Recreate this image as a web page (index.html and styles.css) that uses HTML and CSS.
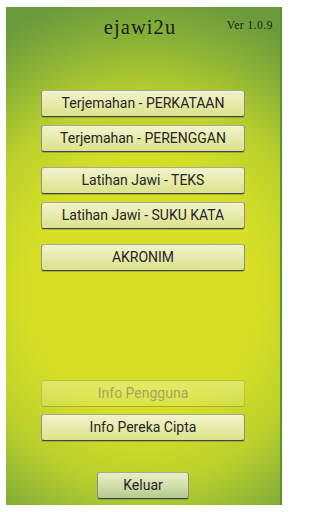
FILE: index.html
```html
<!DOCTYPE html>
<html>
<head>
<meta charset="utf-8">
<link rel="stylesheet" href="styles.css">
</head>
<body>
<div class="panel">
  <div class="header">
    <div></div>
    <div class="title">ejawi2u</div>
    <div class="ver">Ver 1.0.9</div>
  </div>
  <div class="group g1">
    <div class="btn">Terjemahan - PERKATAAN</div>
    <div class="btn">Terjemahan - PERENGGAN</div>
  </div>
  <div class="group g2">
    <div class="btn">Latihan Jawi - TEKS</div>
    <div class="btn">Latihan Jawi - SUKU KATA</div>
  </div>
  <div class="group g3">
    <div class="btn">AKRONIM</div>
  </div>
  <div class="group g4">
    <div class="btn disabled">Info Pengguna</div>
    <div class="btn">Info Pereka Cipta</div>
  </div>
  <div class="group g5">
    <div class="btn exit">Keluar</div>
  </div>
</div>
</body>
</html>
```
FILE: styles.css
```css
html, body {
  margin: 0;
  padding: 0;
  background: #ffffff;
}
body {
  width: 288px;
  height: 512px;
  overflow: hidden;
}
.panel {
  box-sizing: border-box;
  margin: 7px 6px 0 6px;
  width: 276px;
  height: 498px;
  border-right: 2px solid #5a962c;
  background: radial-gradient(ellipse 100% 60% at 50% 57%, #d7e024 0%, #d6df25 42%, #bcd12c 64%, #8ab236 84%, #6a9a3c 100%);
  display: flex;
  flex-direction: column;
  align-items: center;
}
.header {
  box-sizing: border-box;
  width: 100%;
  height: 36px;
  padding: 10px 7px 0 0;
  display: grid;
  grid-template-columns: 1fr auto 1fr;
  align-items: start;
}
.title {
  font-family: "Liberation Serif", "Times New Roman", serif;
  font-size: 20.5px;
  line-height: 20px;
  letter-spacing: 1.1px;
  color: #1c1c1c;
  padding-left: 1px;
}
.ver {
  justify-self: end;
  margin-top: 2px;
  font-family: "Liberation Serif", "Times New Roman", serif;
  font-size: 11.5px;
  line-height: 12px;
  letter-spacing: 0.5px;
  color: #1c1c1c;
}
.group {
  display: flex;
  flex-direction: column;
  align-items: center;
  gap: 8px;
}
.g1 { margin-top: 47px; }
.g2 { margin-top: 15px; }
.g3 { margin-top: 15px; }
.g4 { margin-top: 109px; gap: 7px; }
.g5 { margin-top: 31px; }
.btn {
  box-sizing: border-box;
  width: 204px;
  height: 27px;
  border: 1px solid #8e9088;
  border-top-color: #a6a898;
  border-bottom-color: #3e4456;
  border-radius: 3px;
  background: linear-gradient(#f1f3cc, #e6eaa8 55%, #dbe28a);
  box-shadow: 0 1px 0 rgba(40, 50, 60, 0.25);
  display: flex;
  align-items: center;
  justify-content: center;
  padding-bottom: 2px;
  font-family: Roboto, "Noto Sans", sans-serif;
  font-size: 14px;
  color: #262626;
}
.btn.disabled {
  background: linear-gradient(rgba(255, 255, 255, 0.32), rgba(255, 255, 255, 0.14));
  border-color: rgba(160, 170, 60, 0.55);
  border-bottom-color: rgba(140, 150, 40, 0.7);
  box-shadow: none;
  color: #a3a762;
}
.btn.exit {
  width: 92px;
  background: linear-gradient(#e8eec8, #cfdcaa 55%, #b6c98c);
}
```
